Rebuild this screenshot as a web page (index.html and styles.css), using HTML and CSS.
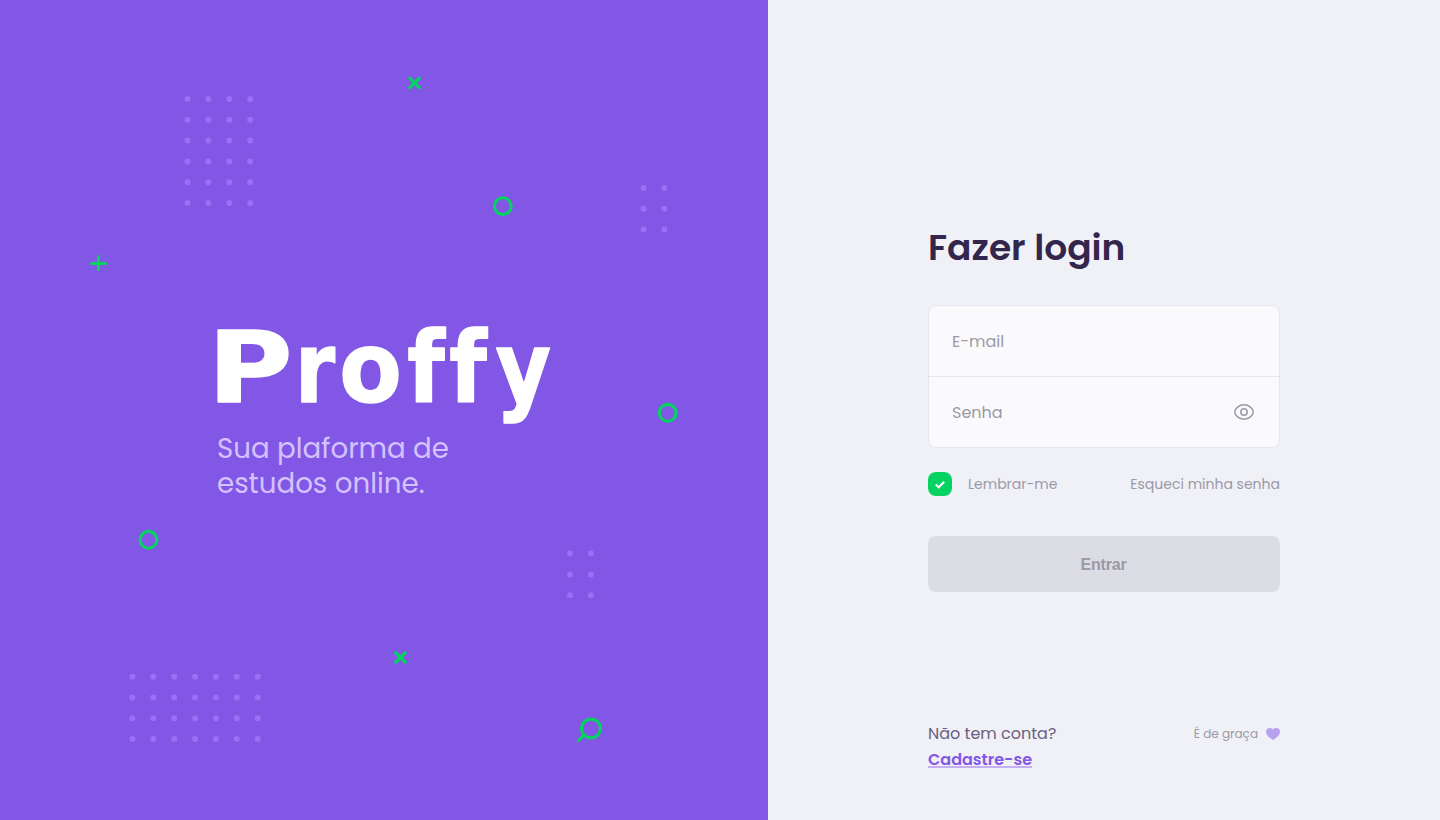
FILE: index.html
```html
<!DOCTYPE html>
<html lang="pt-BR">
<head>
<meta charset="utf-8">
<title>Proffy</title>
<link rel="stylesheet" href="styles.css">
</head>
<body>
<div class="page">
  <section class="hero">
    <svg class="hero-pattern" viewBox="0 0 768 820" aria-hidden="true">
      <g class="dots">
        <path d="M187.5 99h64M187.5 119.8h64M187.5 140.6h64M187.5 161.4h64M187.5 182.2h64M187.5 203h64"/>
        <path d="M643.5 188h22M643.5 208.8h22M643.5 229.6h22"/>
        <path d="M570 553.6h22M570 574.4h22M570 595.2h22"/>
        <path d="M132.4 676.8h126M132.4 697.5h126M132.4 718.2h126M132.4 739h126"/>
      </g>
      <g class="marks">
        <path class="cross" d="M409.8 78.3l9.4 9.4M419.2 78.3l-9.4 9.4M395.8 652.8l9.4 9.4M405.2 652.8l-9.4 9.4"/>
        <path d="M98.5 256.5v13M91.5 263.5h14M578.5 740.5l6-6"/>
        <circle cx="502.8" cy="206.2" r="8.4"/>
        <circle cx="667.7" cy="412.8" r="8.4"/>
        <circle cx="148.5" cy="539.8" r="8.4"/>
        <circle cx="591" cy="728.5" r="9.4"/>
      </g>
    </svg>
    <div class="brand">
      <svg class="logo" viewBox="0 0 335 100" role="img" aria-label="Proffy">
        <g class="wordmark">
          <text transform="translate(-9.3 76) scale(1.18 1)">P</text>
          <text transform="translate(78 76) scale(.83 1)">r</text>
          <text transform="translate(122.2 76) scale(.93 1)">o</text>
          <text transform="translate(190.2 76) scale(.88 1)">f</text>
          <text transform="translate(232.2 76) scale(.88 1)">f</text>
          <text transform="translate(278.6 76) scale(.87 1)">y</text>
        </g>
      </svg>
      <p class="tagline">Sua plaforma de<br>estudos online.</p>
    </div>
  </section>
  <main class="panel">
    <form class="login">
      <h1 class="title">Fazer login</h1>
      <div class="fields">
        <div class="field"><span>E-mail</span></div>
        <div class="field">
          <span class="senha">Senha</span>
          <svg class="eye" viewBox="0 0 24 24"><path d="M2.8 12C2.8 8.6 7 4.8 12 4.8s9.2 3.8 9.2 7.2-4.2 7.2-9.2 7.2S2.8 15.4 2.8 12z"/><circle cx="12" cy="12" r="3.2"/></svg>
        </div>
      </div>
      <div class="options">
        <div class="remember">
          <span class="check"><svg class="tick" viewBox="0 0 24 24"><path d="M7.7 12.5l3 2.8 5.5-5.6"/></svg></span>
          <span>Lembrar-me</span>
        </div>
        <span class="forgot">Esqueci minha senha</span>
      </div>
      <button class="submit" type="button" disabled>Entrar</button>
    </form>
    <footer class="signup">
      <div class="account"><span class="question">Não tem conta?</span><a class="register">Cadastre-se</a></div>
      <div class="free"><span>É de graça</span><svg class="heart" viewBox="0 0 14 12"><path d="M7 12C4.7 10.4 0 7.4 0 3.9 0 1.6 1.6 0 3.8 0 5.2 0 6.3.5 7 1.6 7.7.5 8.8 0 10.2 0 12.4 0 14 1.6 14 3.9 14 7.4 9.3 10.4 7 12z"/></svg></div>
    </footer>
  </main>
</div>
</body>
</html>
```
FILE: styles.css
```css
* { box-sizing: border-box; margin: 0; padding: 0; }
body { background: #f0f0f7; color: #9c98a6; font-family: "Poppins", "Inter", "Noto Sans", sans-serif; font-feature-settings: "cv11" 1; }
.page { display: flex; width: 100%; height: 820px; overflow: hidden; }
.hero { position: relative; flex: 0 0 768px; background: #8257e5; padding: 326px 0 0 217px; }
.hero-pattern { position: absolute; left: 0; top: 0; width: 768px; height: 820px; }
.dots { fill: none; stroke: #9871f5; stroke-width: 6; stroke-linecap: round; stroke-dasharray: 0 20.88; }
.marks { fill: none; stroke: #04d361; stroke-width: 3.1; stroke-linecap: round; }
.cross { stroke-width: 3.3; }
.brand { position: relative; }
.logo { display: block; width: 335px; height: 100px; overflow: visible; }
.wordmark { fill: #fff; stroke: #fff; stroke-width: 1.5; stroke-linejoin: round; font: bold 98px "DejaVu Sans", sans-serif; }
.tagline { margin-top: 5px; color: #d4c2ff; font-size: 27.7px; line-height: 35px; white-space: nowrap; }
.panel { flex: 1; display: flex; flex-direction: column; padding: 225px 160px 0; }
.login { display: flex; flex-direction: column; }
.title { color: #32264d; font-size: 36px; line-height: 46px; font-weight: 600; white-space: nowrap; }
.fields { margin-top: 34px; border: 1px solid #e6e6f0; border-radius: 8px; background: #fafafc; }
.field { display: flex; align-items: center; justify-content: space-between; height: 70px; padding: 0 23px; font-size: 16px; }
.field + .field { height: 71px; border-top: 1px solid #e6e6f0; padding-bottom: 1px; }
.senha { padding-top: 2px; }
.eye { width: 24px; height: 24px; fill: none; stroke: #9c98a6; stroke-width: 1.5; }
.options { display: flex; justify-content: space-between; align-items: center; height: 24px; margin-top: 24px; font-size: 14px; line-height: 24px; white-space: nowrap; }
.remember { display: flex; align-items: center; gap: 16px; }
.check { display: flex; width: 24px; height: 24px; border-radius: 8px; background: #04d361; }
.tick { width: 24px; height: 24px; fill: none; stroke: #fff; stroke-width: 2.1; }
.submit { height: 56px; margin-top: 40px; border: 0; border-radius: 8px; padding: 2px 1px 0 0; background: #dcdce5; color: #9c98a6; font: bold 16px "Liberation Sans", Arial, sans-serif; letter-spacing: -.2px; }
.signup { display: flex; justify-content: space-between; align-items: flex-start; margin-top: 129px; white-space: nowrap; }
.account { display: flex; flex-direction: column; align-items: flex-start; color: #6a6180; font-size: 16px; line-height: 26px; }
.register { color: #8257e5; font-weight: 600; line-height: 20px; margin-top: 3px; text-decoration: underline; text-decoration-color: #c4aff3; text-decoration-thickness: 2px; text-underline-offset: 1px; text-decoration-skip-ink: none; }
.free { display: flex; align-items: center; gap: 8px; height: 26px; font-size: 12px; }
.heart { width: 14px; height: 12px; fill: #b8a1ee; }
```
